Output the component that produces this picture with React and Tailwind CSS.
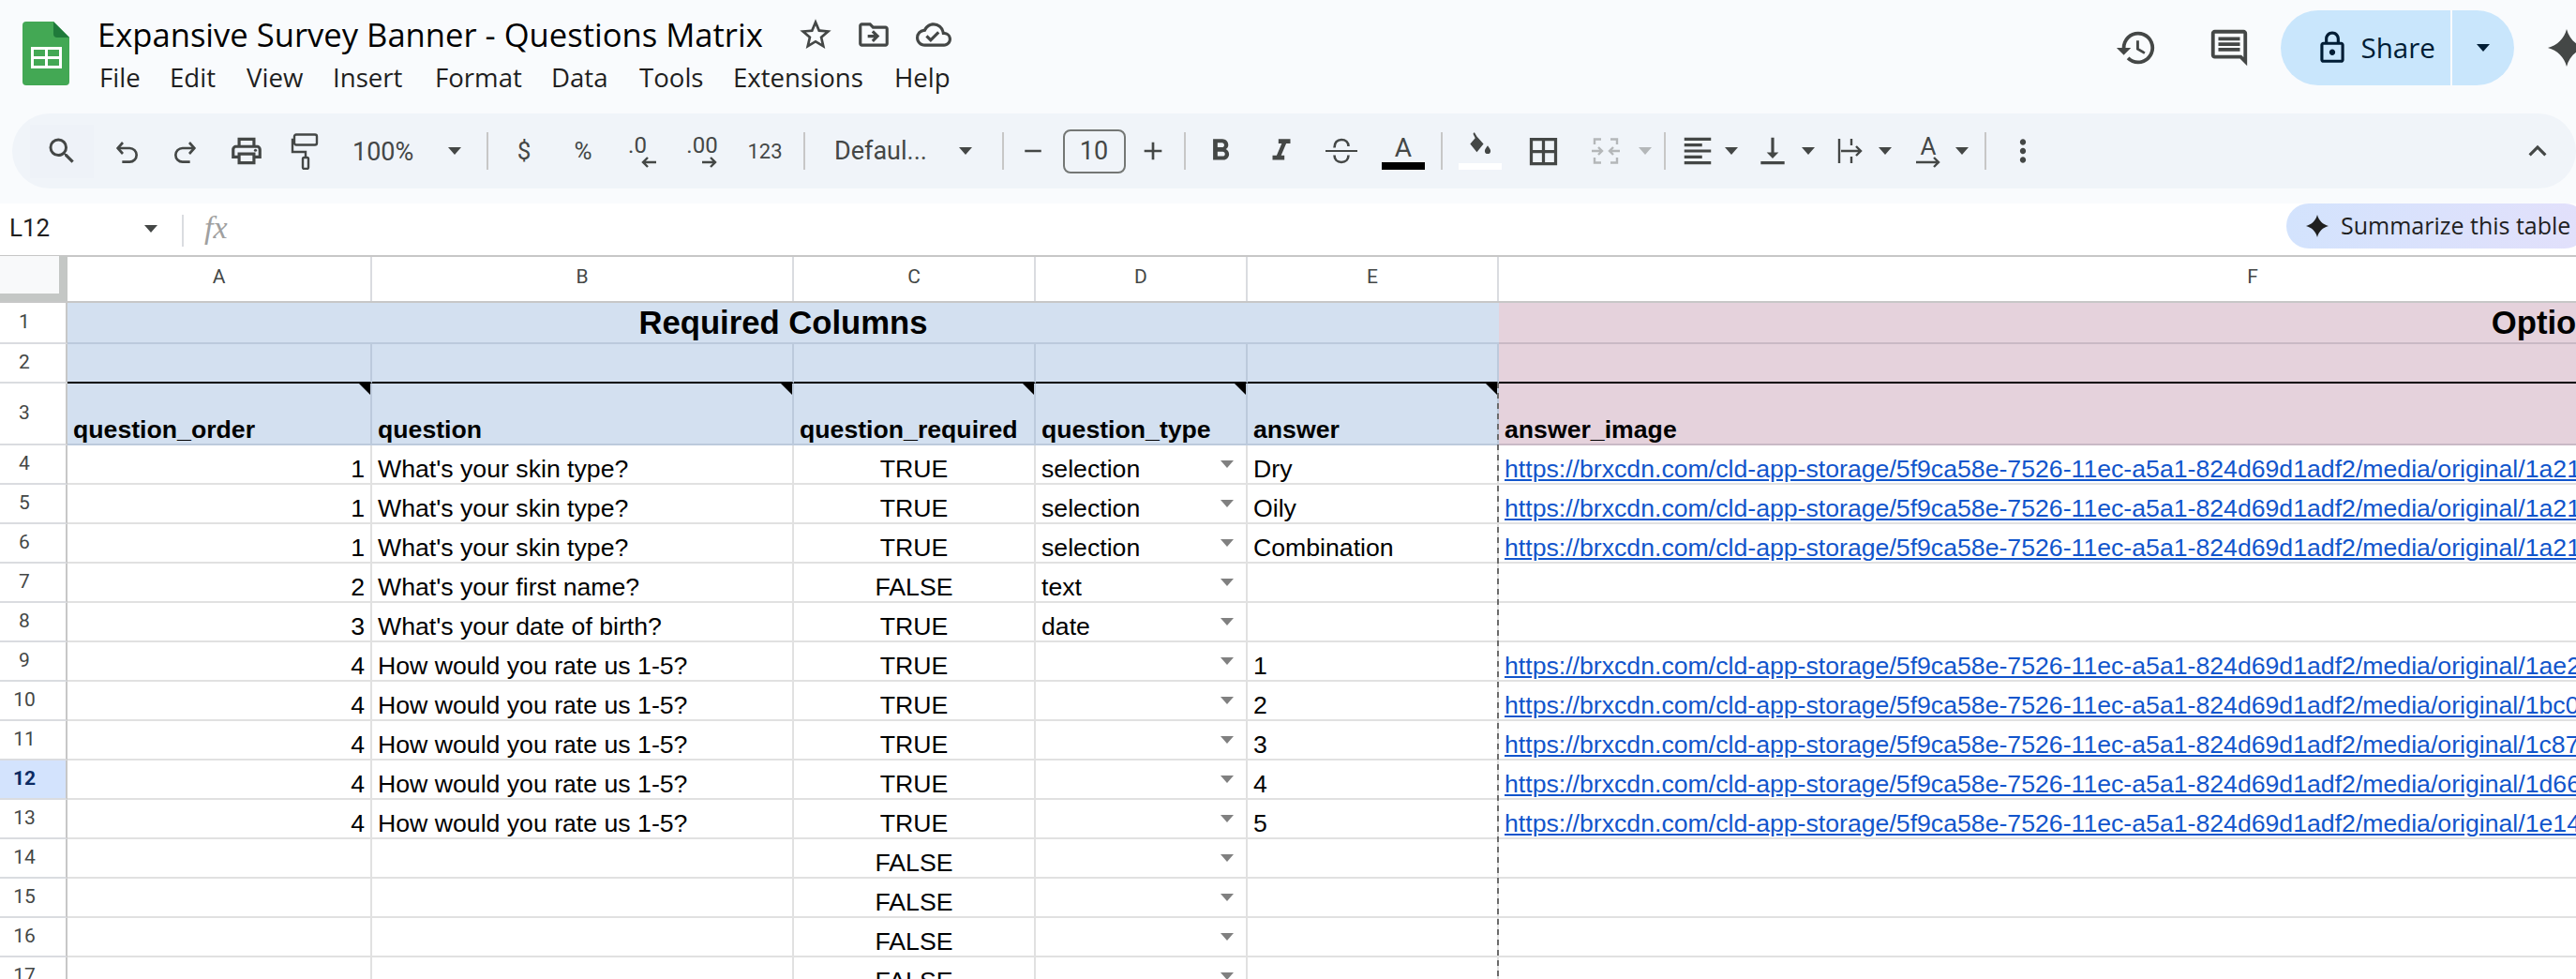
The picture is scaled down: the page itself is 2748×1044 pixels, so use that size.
import React from "react";
import {
  MdSearch, MdOutlinePrint, MdStarBorder, MdOutlineDriveFileMove, MdOutlineCloudDone,
  MdHistory, MdOutlineComment, MdOutlineLock, MdAdd, MdRemove, MdFormatBold, MdFormatItalic,
  MdBorderAll, MdFormatAlignLeft, MdVerticalAlignBottom, MdMoreVert, MdExpandLess,
} from "react-icons/md";

const BASE = "https://brxcdn.com/cld-app-storage/5f9ca58e-7526-11ec-a5a1-824d69d1adf2/media/original/";

const rows = [
  { n: 4, a: 1, q: "What's your skin type?", r: "TRUE", t: "selection", e: "Dry", l: "1a21" },
  { n: 5, a: 1, q: "What's your skin type?", r: "TRUE", t: "selection", e: "Oily", l: "1a21" },
  { n: 6, a: 1, q: "What's your skin type?", r: "TRUE", t: "selection", e: "Combination", l: "1a21" },
  { n: 7, a: 2, q: "What's your first name?", r: "FALSE", t: "text" },
  { n: 8, a: 3, q: "What's your date of birth?", r: "TRUE", t: "date" },
  { n: 9, a: 4, q: "How would you rate us 1-5?", r: "TRUE", e: "1", l: "1ae2" },
  { n: 10, a: 4, q: "How would you rate us 1-5?", r: "TRUE", e: "2", l: "1bc0" },
  { n: 11, a: 4, q: "How would you rate us 1-5?", r: "TRUE", e: "3", l: "1c87" },
  { n: 12, a: 4, q: "How would you rate us 1-5?", r: "TRUE", e: "4", l: "1d66" },
  { n: 13, a: 4, q: "How would you rate us 1-5?", r: "TRUE", e: "5", l: "1e14" },
  { n: 14, r: "FALSE" },
  { n: 15, r: "FALSE" },
  { n: 16, r: "FALSE" },
  { n: 17, r: "FALSE" },
];

const colHeaders = [
  { label: "A", w: "w-[325px]" },
  { label: "B", w: "w-[450px]" },
  { label: "C", w: "w-[258px]" },
  { label: "D", w: "w-[226px]" },
  { label: "E", w: "w-[268px]" },
  { label: "F", w: "w-[1610px]" },
];

const Caret = ({ color = "border-t-[#444746]" }) => (
  <span className={`block h-0 w-0 border-x-[7px] border-t-[8px] border-x-transparent ${color}`} />
);

const Sep = ({ w }) => (
  <div className={`flex shrink-0 justify-center ${w}`}>
    <div className="h-10 w-0.5 bg-[#c7c7c7]" />
  </div>
);

const Slot = ({ w, children }) => (
  <div className={`flex h-10 shrink-0 items-center justify-center text-[#444746] ${w}`}>{children}</div>
);

const Spark = ({ className }) => (
  <svg viewBox="0 0 24 24" className={className} fill="currentColor">
    <path d="M12 0C13.500 6 18 10.500 24 12 18 13.500 13.500 18 12 24 10.500 18 6 13.500 0 12 6 10.500 10.500 6 12 0Z" />
  </svg>
);

const SheetsLogo = () => (
  <svg viewBox="0 0 50 68" className="h-[68px] w-[50px] shrink-0">
    <path d="M4 0H33L50 17V64a4 4 0 0 1-4 4H4a4 4 0 0 1-4-4V4a4 4 0 0 1 4-4Z" fill="#43a854" />
    <path d="M33 0V13a4 4 0 0 0 4 4H50Z" fill="#1f7a3a" />
    <rect x="9" y="27" width="33" height="23" fill="#fff" />
    <rect x="12" y="30" width="12" height="7" fill="#43a854" />
    <rect x="27" y="30" width="12" height="7" fill="#43a854" />
    <rect x="12" y="40" width="12" height="7" fill="#43a854" />
    <rect x="27" y="40" width="12" height="7" fill="#43a854" />
  </svg>
);

const UndoIcon = ({ flip }) => (
  <svg viewBox="0 0 24 24" className={`mt-1.5 h-[32px] w-[32px] ${flip ? "-scale-x-100" : ""}`} fill="none" stroke="currentColor" strokeWidth="2">
    <path d="M9 3 5 7.500 9 12" />
    <path d="M5 7.500H14.500a5.500 5.500 0 0 1 0 11H8.500" />
  </svg>
);

const PaintIcon = () => (
  <svg viewBox="0 0 30 40" className="h-10 w-[30px]" fill="none" stroke="currentColor" strokeWidth="2.4">
    <rect x="4" y="2.500" width="24" height="11" rx="2" />
    <path d="M4 8H2V21H16V27" />
    <rect x="13" y="27" width="6" height="12" rx="1.500" />
  </svg>
);

const StrikeIcon = () => (
  <svg viewBox="0 0 34 28" className="h-7 w-[34px]" fill="none" stroke="currentColor" strokeWidth="2.6">
    <path d="M0 14H34" strokeWidth="2.2" />
    <path d="M9.500 10.500C9.500 5 12.500 2 17 2 21.500 2 24.500 5 24.500 9" />
    <path d="M9.500 18.500C9.500 23 12.500 26 17 26 21.500 26 24.500 23 24.500 18.500" />
  </svg>
);

const MergeIcon = () => (
  <svg viewBox="0 0 30 28" className="h-[28px] w-[30px]" fill="none" stroke="#b4b7b9" strokeWidth="2.400">
    <path d="M10 1.500H3V7M20 1.500H27V7M10 26.500H3V21M20 26.500H27V21" />
    <path d="M0 14H11M7 10l4 4-4 4M30 14H19M23 10l-4 4 4 4" />
  </svg>
);

const FillIcon = () => (
  <svg viewBox="0 0 30 28" className="mb-2 h-[28px] w-[30px]" fill="#444746">
    <path d="M8 0 11 5 19 14 11 24 3 14 9 7 6.500 2Z" />
    <path d="M24 16c2 3 3.500 4.500 3.500 6.500a3.500 3.500 0 0 1-7 0C20.500 20.500 22 19 24 16Z" />
  </svg>
);

const WrapIcon = () => (
  <svg viewBox="0 0 28 28" className="h-[28px] w-[28px]" fill="none" stroke="#444746" strokeWidth="2.400">
    <path d="M2 1V27M15 1V8M15 20V27" />
    <path d="M4 14H25M20 9l5 5-5 5" />
  </svg>
);

const ArrowSmall = ({ left }) => (
  <svg viewBox="0 0 16 12" className="h-[12px] w-[16px]" fill="none" stroke="currentColor" strokeWidth="2.400">
    {left ? <path d="M16 6H2M7 1 2 6l5 5" /> : <path d="M0 6H14M9 1l5 5-5 5" />}
  </svg>
);

const Toolbar = () => (
  <div className="ml-[13px] flex h-20 items-center rounded-[40px] bg-[#f0f4f9] pl-[19px] font-['Roboto',sans-serif]">
    <div className="flex h-[57px] w-[68px] shrink-0 items-center justify-center bg-[#eef2f8] text-[#444746]">
      <MdSearch className="h-9 w-9" />
    </div>
    <Slot w="w-[70px]"><UndoIcon /></Slot>
    <Slot w="w-[56px]"><UndoIcon flip /></Slot>
    <Slot w="w-[74px]"><MdOutlinePrint className="h-[38px] w-[38px]" /></Slot>
    <Slot w="w-[50px]"><PaintIcon /></Slot>
    <div className="flex h-10 w-[155px] shrink-0 items-center pl-[26px] text-[#444746]">
      <span className="mt-0.5 w-[74px] text-[27px] leading-none">100%</span>
      <span className="ml-[28px]"><Caret /></span>
    </div>
    <Sep w="w-[30px]" />
    <Slot w="w-[48px]"><span className="text-[26px]">$</span></Slot>
    <Slot w="w-[78px]"><span className="text-[26px]">%</span></Slot>
    <Slot w="w-[50px]">
      <div className="flex flex-col items-center leading-none">
        <span className="-ml-3 text-[24px] leading-[24px]">.0</span>
        <span className="ml-3"><ArrowSmall left /></span>
      </div>
    </Slot>
    <Slot w="w-[80px]">
      <div className="flex flex-col items-center leading-none">
        <span className="-ml-1 text-[24px] leading-[24px]">.00</span>
        <span className="ml-3"><ArrowSmall /></span>
      </div>
    </Slot>
    <Slot w="w-[50px]"><span className="text-[22px]">123</span></Slot>
    <Sep w="w-[34px]" />
    <div className="flex h-10 w-[178px] shrink-0 items-center pl-[15px] text-[#444746]">
      <span className="w-[105px] text-[27px] leading-none">Defaul...</span>
      <span className="ml-[28px]"><Caret /></span>
    </div>
    <Sep w="w-[34px]" />
    <Slot w="w-[30px]"><MdRemove className="h-[30px] w-[30px] shrink-0" /></Slot>
    <div className="flex h-12 w-[100px] shrink-0 items-center justify-center">
      <div className="flex h-[47px] w-[67px] items-center justify-center rounded-[8px] border-2 border-[#747775] text-[27px] text-[#444746]">10</div>
    </div>
    <Slot w="w-[26px]"><MdAdd className="h-[32px] w-[32px] shrink-0" /></Slot>
    <Sep w="w-[42px]" />
    <Slot w="w-[34px]"><MdFormatBold className="h-[38px] w-[38px] shrink-0" /></Slot>
    <div className="ml-5 flex">
      <Slot w="w-[56px]"><MdFormatItalic className="h-[38px] w-[38px]" /></Slot>
    </div>
    <Slot w="w-[72px]"><StrikeIcon /></Slot>
    <div className="flex h-10 w-[60px] shrink-0 flex-col items-center justify-end">
      <span className="text-[28px] leading-[30px] text-[#444746]">A</span>
      <div className="h-2 w-[46px] bg-black" />
    </div>
    <Sep w="w-[22px]" />
    <div className="flex h-10 w-[60px] shrink-0 flex-col items-center justify-end">
      <FillIcon />
      <div className="h-2 w-[46px] bg-white" />
    </div>
    <Slot w="w-[74px]"><MdBorderAll className="h-[39px] w-[39px]" /></Slot>
    <Slot w="w-[60px]"><MergeIcon /></Slot>
    <Slot w="w-[24px]"><Caret color="border-t-[#b4b7b9]" /></Slot>
    <Sep w="w-[18px]" />
    <Slot w="w-[52px]"><MdFormatAlignLeft className="h-[38px] w-[38px] shrink-0" /></Slot>
    <Slot w="w-[20px]"><Caret /></Slot>
    <div className="ml-[14px] flex">
      <Slot w="w-[40px]"><MdVerticalAlignBottom className="h-[38px] w-[38px]" /></Slot>
    </div>
    <Slot w="w-[36px]"><Caret /></Slot>
    <Slot w="w-[54px]"><WrapIcon /></Slot>
    <Slot w="w-[20px]"><Caret /></Slot>
    <div className="ml-4 flex">
      <Slot w="w-[40px]">
        <div className="flex flex-col items-center">
          <span className="text-[26px] leading-[24px]">A</span>
          <span className="-mt-px"><svg viewBox="0 0 28 12" className="h-3 w-7" fill="none" stroke="#444746" strokeWidth="2.400"><path d="M1 6H25M20 1l5 5-5 5" /></svg></span>
        </div>
      </Slot>
    </div>
    <Slot w="w-[32px]"><Caret /></Slot>
    <Sep w="w-[18px]" />
    <Slot w="w-[62px]"><MdMoreVert className="h-[38px] w-[38px]" /></Slot>
    <div className="flex-1" />
    <Slot w="w-[82px]"><MdExpandLess className="h-[38px] w-[38px]" /></Slot>
  </div>
);

const Header = () => (
  <div className="h-[217px] bg-[#f9fbfd]">
    <div className="flex h-[121px] pl-6">
      <div className="mt-[23px]"><SheetsLogo /></div>
      <div className="ml-[30px] flex flex-col">
        <div className="mt-[16px] flex h-[42px] items-center text-[#444746]">
          <span className="w-[710px] whitespace-nowrap font-['Open_Sans',sans-serif] text-[34.6px] leading-[42px] text-black">Expansive Survey Banner - Questions Matrix</span>
          <MdStarBorder className="ml-[36px] h-10 w-10" />
          <MdOutlineDriveFileMove className="ml-[23px] h-[38px] w-[38px]" />
          <MdOutlineCloudDone className="ml-[26px] h-[38px] w-[38px]" />
        </div>
        <div className="mt-[4px] flex h-[42px] items-center font-['Open_Sans',sans-serif] text-[27.6px] text-[#1f1f1f]">
          <span className="w-[77px] pl-[2px]">File</span>
          <span className="w-[82px]">Edit</span>
          <span className="w-[92px]">View</span>
          <span className="w-[109px]">Insert</span>
          <span className="w-[124px]">Format</span>
          <span className="w-[94px]">Data</span>
          <span className="w-[100px]">Tools</span>
          <span className="w-[172px]">Extensions</span>
          <span>Help</span>
        </div>
      </div>
      <div className="-mr-2.5 ml-auto flex h-[102px] shrink-0 items-center text-[#444746]">
        <MdHistory className="h-[46px] w-[46px]" />
        <MdOutlineComment className="ml-[53px] h-[46px] w-[46px]" />
        <div className="ml-[32px] flex h-20 w-[249px] overflow-hidden rounded-full font-['Open_Sans',sans-serif] text-[#001d35]">
          <div className="flex w-[181px] items-center justify-end bg-[#c9e6fc] pr-[16px]">
            <MdOutlineLock className="h-[38px] w-[38px]" />
            <span className="ml-[11px] text-[29.6px] font-medium">Share</span>
          </div>
          <div className="w-0.5 bg-[#f9fbfd]" />
          <div className="flex flex-1 items-center justify-center bg-[#c9e6fc]"><Caret color="border-t-[#001d35]" /></div>
        </div>
        <Spark className="ml-[36px] h-10 w-10 shrink-0" />
      </div>
    </div>
    <Toolbar />
  </div>
);

const FormulaBar = () => (
  <div className="flex h-[55px] items-start bg-white">
    <div className="flex h-[53px] w-[194px] shrink-0 items-center pl-2.5">
      <span className="font-['Roboto',sans-serif] text-[26px] text-[#1f1f1f]">L12</span>
      <span className="ml-auto mr-[26px]"><Caret /></span>
    </div>
    <div className="mt-3 h-[34px] w-0.5 bg-[#dadce0]" />
    <span className="ml-[22px] mt-[7px] font-['Liberation_Serif',serif] text-[34px] italic leading-[38px] text-[#a0a0a0]">fx</span>
    <div className="-mr-[12px] ml-auto flex h-12 w-[321px] shrink-0 items-center rounded-full bg-linear-to-r from-[#d3e3fd] to-[#e2e0fb] pl-[21px] font-['Open_Sans',sans-serif] text-[#1f1f1f]">
      <Spark className="h-6 w-6 shrink-0" />
      <span className="ml-[13px] whitespace-nowrap text-[25px]">Summarize this table</span>
    </div>
  </div>
);

const RowNumber = ({ n, h, selected }) => (
  <div className={`flex w-[72px] shrink-0 items-center border-r-2 border-b-2 border-r-[#c7c7c7] border-b-[#dadce0] ${h} ${selected ? "bg-[#d3e3fd]" : "bg-white"}`}>
    <span className={`w-[52px] text-center font-['Roboto',sans-serif] text-[21px] ${selected ? "font-bold text-[#0b2a63]" : "text-[#444746]"}`}>{n}</span>
  </div>
);

const Triangle = () => (
  <span className="absolute top-0 right-0 h-3 w-3 bg-black [clip-path:polygon(0_0,100%_0,100%_100%)]" />
);

const headCell = "relative flex shrink-0 items-end border-r-2 border-[#bccadc] pl-1.5 font-bold leading-[30px] whitespace-nowrap";

const DataRow = ({ row }) => (
  <div className="flex h-[42px]">
    <RowNumber n={row.n} h="h-[42px]" selected={row.n === 12} />
    <div className="flex items-end border-b-2 border-[#e1e1e1] bg-white font-['Liberation_Sans',sans-serif] text-[26.67px] leading-[30px] text-black">
      <div className="h-10 w-[325px] shrink-0 border-r-2 border-[#e1e1e1] pt-2.5 pr-1.5 text-right">{row.a}</div>
      <div className="h-10 w-[450px] shrink-0 border-r-2 border-[#e1e1e1] pt-2.5 pl-1.5 whitespace-nowrap">{row.q}</div>
      <div className="h-10 w-[258px] shrink-0 border-r-2 border-[#e1e1e1] pt-2.5 text-center">{row.r}</div>
      <div className="relative h-10 w-[226px] shrink-0 border-r-2 border-[#e1e1e1] pt-2.5 pl-1.5">
        {row.t}
        <span className="absolute top-[16px] right-[13px]"><Caret color="border-t-[#808080]" /></span>
      </div>
      <div className="h-10 w-[268px] shrink-0 border-r-2 border-[#e1e1e1] pt-2.5 pl-1.5">{row.e}</div>
      <div className="h-10 w-[1610px] shrink-0 overflow-hidden pt-2.5 pl-1.5 whitespace-nowrap text-[#1155cc] underline">
        {row.l ? `${BASE}${row.l}c9e47a03d5b6.png` : ""}
      </div>
    </div>
  </div>
);

const Grid = () => (
  <div className="relative">
    {/* column letters */}
    <div className="flex h-[51px] border-y-2 border-[#c7c7c7] bg-white">
      <div className="-mt-px w-[72px] shrink-0 bg-[#c4c7c5]">
        <div className="h-10 w-[63px] bg-[#f8f9fa]" />
      </div>
      {colHeaders.map((col) => (
        <div key={col.label} className={`flex shrink-0 items-center justify-center border-r-2 border-[#dadce0] pb-1 font-['Roboto',sans-serif] text-[21px] text-[#444746] ${col.w}`}>
          {col.label}
        </div>
      ))}
    </div>

    {/* row 1 */}
    <div className="flex h-11">
      <RowNumber n={1} h="h-11" />
      <div className="flex w-[1527px] shrink-0 items-center justify-center border-b-2 border-[#bccadc] bg-[#d3e0f0] font-['Liberation_Sans',sans-serif] text-[34.67px] font-bold">
        Required Columns
      </div>
      <div className="flex w-[2416px] shrink-0 items-center justify-center border-b-2 border-[#c9b9c5] bg-[#e5d2dc] font-['Liberation_Sans',sans-serif] text-[34.67px] font-bold">
        Optional Columns
      </div>
    </div>

    {/* row 2 */}
    <div className="flex h-[42px]">
      <RowNumber n={2} h="h-[42px]" />
      {colHeaders.slice(0, 5).map((col) => (
        <div key={col.label} className={`shrink-0 border-r-2 border-b-2 border-r-[#bccadc] border-b-black bg-[#d3e0f0] ${col.w}`} />
      ))}
      <div className="w-[1610px] shrink-0 border-b-2 border-black bg-[#e5d2dc]" />
    </div>

    {/* row 3 */}
    <div className="flex h-[66px]">
      <RowNumber n={3} h="h-[66px]" />
      <div className="flex border-b-2 border-[#bccadc] bg-[#d3e0f0] font-['Liberation_Sans',sans-serif] text-[26.67px]">
        {["question_order", "question", "question_required", "question_type", "answer"].map((label, i) => (
          <div key={label} className={`${headCell} ${colHeaders[i].w}`}>
            {label}
            <Triangle />
          </div>
        ))}
      </div>
      <div className="flex w-[1610px] shrink-0 items-end border-b-2 border-[#c9b9c5] bg-[#e5d2dc] pl-1.5 font-['Liberation_Sans',sans-serif] text-[26.67px] leading-[30px] font-bold">
        answer_image
      </div>
    </div>

    {rows.map((row) => (
      <DataRow key={row.n} row={row} />
    ))}

    {/* frozen column divider */}
    <div className="absolute top-[136px] left-[1597px] h-[700px] w-0.5 bg-[repeating-linear-gradient(to_bottom,#6b6b6b_0_6px,transparent_6px_11px)]" />
  </div>
);

export default function App() {
  return (
    <div className="h-[1044px] w-[2748px] overflow-hidden bg-white">
      <Header />
      <FormulaBar />
      <Grid />
    </div>
  );
}
